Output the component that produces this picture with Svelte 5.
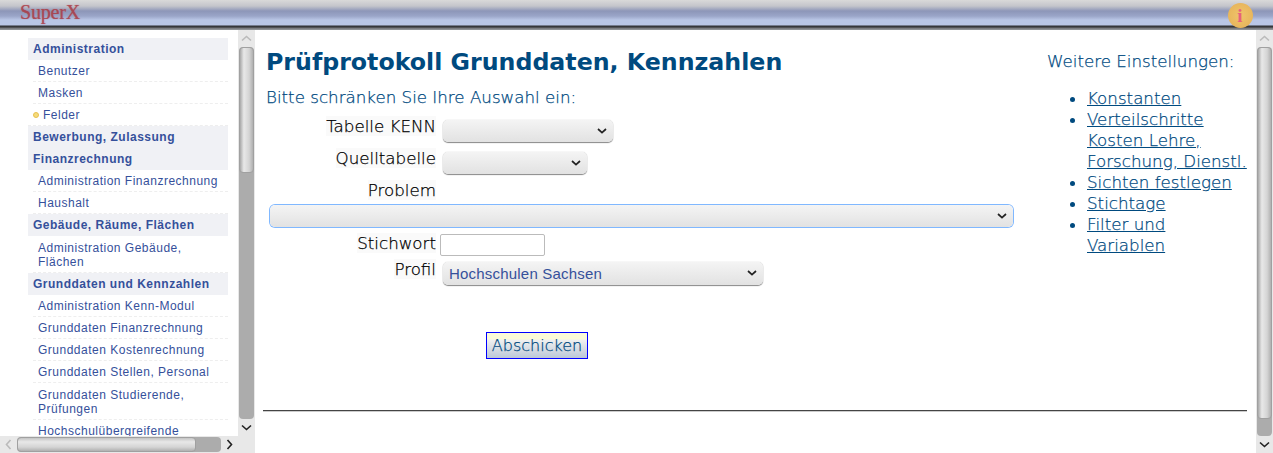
<script>
	const menu = [
		{ label: "Administration", head: true },
		{ label: "Benutzer" },
		{ label: "Masken" },
		{ label: "Felder", active: true },
		{ label: "Bewerbung, Zulassung", head: true },
		{ label: "Finanzrechnung", head: true },
		{ label: "Administration Finanzrechnung" },
		{ label: "Haushalt" },
		{ label: "Gebäude, Räume, Flächen", head: true },
		{ label: "Administration Gebäude, Flächen", wrap: true },
		{ label: "Grunddaten und Kennzahlen", head: true },
		{ label: "Administration Kenn-Modul" },
		{ label: "Grunddaten Finanzrechnung" },
		{ label: "Grunddaten Kostenrechnung" },
		{ label: "Grunddaten Stellen, Personal" },
		{ label: "Grunddaten Studierende, Prüfungen", wrap: true },
		{ label: "Hochschulübergreifende" },
	]
	const links = ["Konstanten", "Verteilschritte Kosten Lehre, Forschung, Dienstl.", "Sichten festlegen", "Stichtage", "Filter und Variablen"]
</script>

{#snippet chevron()}
	<svg class="chev" viewBox="0 0 10 6"><path d="M1 1l4 3.6L9 1" fill="none" stroke="#222" stroke-width="1.7" /></svg>
{/snippet}

<div class="page">
	<header>
		<span class="logo">SuperX</span>
		<span class="info">i</span>
	</header>
	<div class="body">
		<aside>
			<div class="nav-row">
				<nav>
					{#each menu as m}
						<div class:head={m.head} class:item={!m.head} class:active={m.active} class:wrap={m.wrap}>{m.label}</div>
					{/each}
				</nav>
				<div class="vbar">
					<svg class="arrow" viewBox="0 0 17 17"><path d="M4 10.5l4.5-4 4.5 4" fill="none" stroke="#bbb" stroke-width="1.6" /></svg>
					<div class="track"><div class="thumb side"></div></div>
					<svg class="arrow" viewBox="0 0 17 17"><path d="M4 6.5l4.5 4 4.5-4" fill="none" stroke="#222" stroke-width="1.6" /></svg>
				</div>
			</div>
			<div class="hbar">
				<svg class="arrow" viewBox="0 0 17 17"><path d="M10.5 4l-4 4.5 4 4.5" fill="none" stroke="#bbb" stroke-width="1.6" /></svg>
				<div class="htrack"><div class="hthumb"></div></div>
				<svg class="arrow" viewBox="0 0 17 17"><path d="M6.5 4l4 4.5-4 4.5" fill="none" stroke="#222" stroke-width="1.6" /></svg>
				<div class="corner"></div>
			</div>
		</aside>
		<main>
			<div class="content">
				<div class="columns">
					<form on:submit|preventDefault>
						<h1>Prüfprotokoll Grunddaten, Kennzahlen</h1>
						<p class="intro">Bitte schränken Sie Ihre Auswahl ein:</p>
						<div class="row r1">
							<span class="lbl"><span>Tabelle KENN</span></span>
							<div class="sel s1"><select><option></option></select>{@render chevron()}</div>
						</div>
						<div class="row r2">
							<span class="lbl"><span>Quelltabelle</span></span>
							<div class="sel s2"><select><option></option></select>{@render chevron()}</div>
						</div>
						<div class="row r3"><span class="lbl"><span>Problem</span></span></div>
						<div class="sel s3"><select><option></option></select>{@render chevron()}</div>
						<div class="row r4"><span class="lbl"><span>Stichwort</span></span><input type="text" /></div>
						<div class="row r5">
							<span class="lbl"><span>Profil</span></span>
							<div class="sel s4"><select><option>Hochschulen Sachsen</option></select>{@render chevron()}</div>
						</div>
						<button type="submit">Abschicken</button>
					</form>
					<section class="more">
						<p>Weitere Einstellungen:</p>
						<ul>
							{#each links as l}
								<li><a href="#top">{l}</a></li>
							{/each}
						</ul>
					</section>
				</div>
				<hr />
			</div>
			<div class="vbar main-bar">
				<svg class="arrow" viewBox="0 0 17 17"><path d="M4 10.5l4.5-4 4.5 4" fill="none" stroke="#bbb" stroke-width="1.6" /></svg>
				<div class="track"><div class="thumb wide"></div></div>
				<svg class="arrow" viewBox="0 0 17 17"><path d="M4 6.5l4.5 4 4.5-4" fill="none" stroke="#222" stroke-width="1.6" /></svg>
			</div>
		</main>
	</div>
</div>

<style>
	:global(body) {
		margin: 0;
		background: #fff;
		overflow: hidden;
	}

	.page {
		width: 1273px;
		height: 453px;
		display: flex;
		flex-direction: column;
		font-family: "DejaVu Sans", sans-serif;
	}

	header {
		height: 30px;
		box-sizing: border-box;
		display: flex;
		justify-content: space-between;
		background: linear-gradient(#d9d9d9 0, #c4c5cb 6px, #8d96b8 11px, #9aa5c8 16px, #b9c6e6 20px, #b9c6e6 25px, #2f3034 26px, #3c3d40 27px, #8f9296 29px);
		padding: 0 20px;
	}

	.logo {
		font-family: "Liberation Serif", serif;
		font-size: 20px;
		line-height: 24px;
		letter-spacing: -0.2px;
		color: #a83a44;
		opacity: 0.85;
		text-shadow: 0 0 1px #c05058;
	}

	.info {
		width: 25px;
		height: 25px;
		margin: 3px 0.5px 0 0;
		border-radius: 50%;
		background: radial-gradient(#f0c46c, #e8b65c 70%, #d9a850);
		color: #e8607c;
		font: bold 19px/25px "Liberation Serif", serif;
		text-align: center;
	}

	.body {
		flex: 1;
		display: flex;
		min-height: 0;
	}

	aside {
		width: 255px;
		display: flex;
		flex-direction: column;
		font-family: "Liberation Sans", sans-serif;
	}

	.nav-row {
		flex: 1;
		display: flex;
		min-height: 0;
	}

	nav {
		flex: 1;
		padding: 8px 10px 0 28px;
		overflow: hidden;
		font-size: 12px;
		letter-spacing: 0.5px;
		color: #35509b;
	}

	.head {
		background: #f0f1f5;
		font-weight: bold;
		line-height: 22px;
		padding-left: 5px;
	}

	.item {
		margin-left: 5px;
		padding: 4px 0 3px 5px;
		line-height: 14px;
		border-bottom: 1px dashed #eee;
		background: #fff;
	}

	.wrap {
		padding-top: 5px;
	}

	.active {
		margin-left: 0;
		padding-left: 15px;
		position: relative;
	}

	.active::before {
		content: "";
		position: absolute;
		left: 5px;
		top: 8px;
		width: 4px;
		height: 4px;
		border: 1px solid #e8c04f;
		background: #f5dc7c;
		border-radius: 50%;
	}

	.vbar {
		width: 17px;
		display: flex;
		flex-direction: column;
		background: #e8e8e8;
	}

	.arrow {
		width: 17px;
		height: 17px;
		flex: none;
		display: block;
	}

	.track {
		flex: 1;
		margin: 0 1px;
		min-height: 0;
		background: #acacac;
		border-radius: 4px;
		overflow: hidden;
	}

	.thumb {
		background: linear-gradient(90deg, #a8a8a8, #e8e8e8 30%, #d4d4d4 70%, #b0b0b0);
		border: 1px solid #a0a0a0;
		border-radius: 4px;
		box-sizing: border-box;
	}

	.side {
		height: 126px;
	}

	.wide {
		height: 372px;
	}

	.hbar {
		height: 17px;
		display: flex;
		background: #e8e8e8;
	}

	.htrack {
		width: 204px;
		margin: 1px 0;
		background: #acacac;
		border-radius: 4px;
		overflow: hidden;
	}

	.hthumb {
		width: 179px;
		height: 100%;
		box-sizing: border-box;
		border: 1px solid #a0a0a0;
		border-radius: 4px;
		background: linear-gradient(#c4c4c4, #e8e8e8 30%, #d4d4d4 70%, #b0b0b0);
	}

	.corner {
		width: 17px;
	}

	main {
		flex: 1;
		display: flex;
		min-width: 0;
	}

	.content {
		flex: 1;
		min-width: 0;
		padding-left: 8px;
		color: #004a7f;
	}

	.columns {
		display: flex;
		height: 380px;
	}

	form {
		width: 784px;
		flex: none;
		display: flex;
		flex-direction: column;
		align-items: flex-start;
	}

	h1 {
		margin: 17px 0 0 3px;
		font-size: 23.7px;
		line-height: 30px;
		font-weight: bold;
	}

	.intro,
	.lbl,
	button,
	.more {
		font-family: "DejaVu Sans Light", "DejaVu Sans", sans-serif;
		font-weight: 200;
		-webkit-text-stroke: 0.25px currentColor;
	}

	.intro {
		margin: 11px 0 1px 3px;
		font-size: 16.7px;
		line-height: 18px;
	}

	.row {
		display: flex;
		align-items: flex-start;
	}

	.lbl {
		width: 173px;
		text-align: right;
		font-size: 16.7px;
		line-height: 20px;
		flex: none;
		color: #000;
	}

	.lbl span {
		display: inline-block;
		background: #fafafa;
	}

	.r1 { margin-top: 9px; }
	.r2 { margin-top: 6px; }
	.r3 { margin-top: 6px; }
	.r4 { margin-top: 6px; }
	.r5 { margin-top: 3px; }

	.sel {
		position: relative;
		height: 22px;
		margin-left: 7px;
		margin-top: 4px;
	}

	.sel select {
		appearance: none;
		display: block;
		width: 100%;
		height: 100%;
		border: none;
		outline: none;
		border-radius: 5px;
		background: linear-gradient(#f4f4f4, #e2e2e2);
		box-shadow: 0 1px 1px #888, 0 0 1px #aaa;
		font: 15px "Liberation Sans", sans-serif;
		letter-spacing: 0.2px;
		color: #35509b;
		padding: 0 0 0 6px;
	}

	.chev {
		position: absolute;
		right: 6px;
		top: 8px;
		width: 10px;
		height: 6px;
	}

	.s1 { width: 170px; }
	.s2 { width: 144px; }
	.s3 {
		width: 743px;
		margin-top: 5px;
	}
	.s3 select {
		box-shadow: 0 0 0 1px #80b8ff;
	}
	.s4 { width: 320px; height: 23px; margin-top: 3px; }

	input {
		width: 105px;
		height: 22px;
		box-sizing: border-box;
		border: 1px solid #bbb;
		border-radius: 2px;
		margin: 1px 0 0 4px;
		background: #fff;
		padding: 0;
	}

	button {
		margin: 47px 0 0 223px;
		width: 102px;
		height: 27px;
		box-sizing: border-box;
		border: 1px solid #0000ff;
		background: linear-gradient(#fbfbd8 0, #fbfbd8 6px, #f0f0f0 7px, #bcc8d8);
		color: #004a7f;
		font-size: 16px;
		padding: 0;
	}

	.more {
		flex: 1;
		font-size: 16.7px;
		line-height: 21px;
	}

	.more p {
		margin: 21px 0 0 0;
		white-space: nowrap;
	}

	ul {
		margin: 16px 0 0 0;
		padding-left: 40px;
		width: 161px;
	}

	a {
		color: #004a7f;
	}

	hr {
		margin: 0 9px 0 0;
		border: none;
		border-top: 1px solid #444;
		border-bottom: 1px solid #ccc;
	}
</style>
